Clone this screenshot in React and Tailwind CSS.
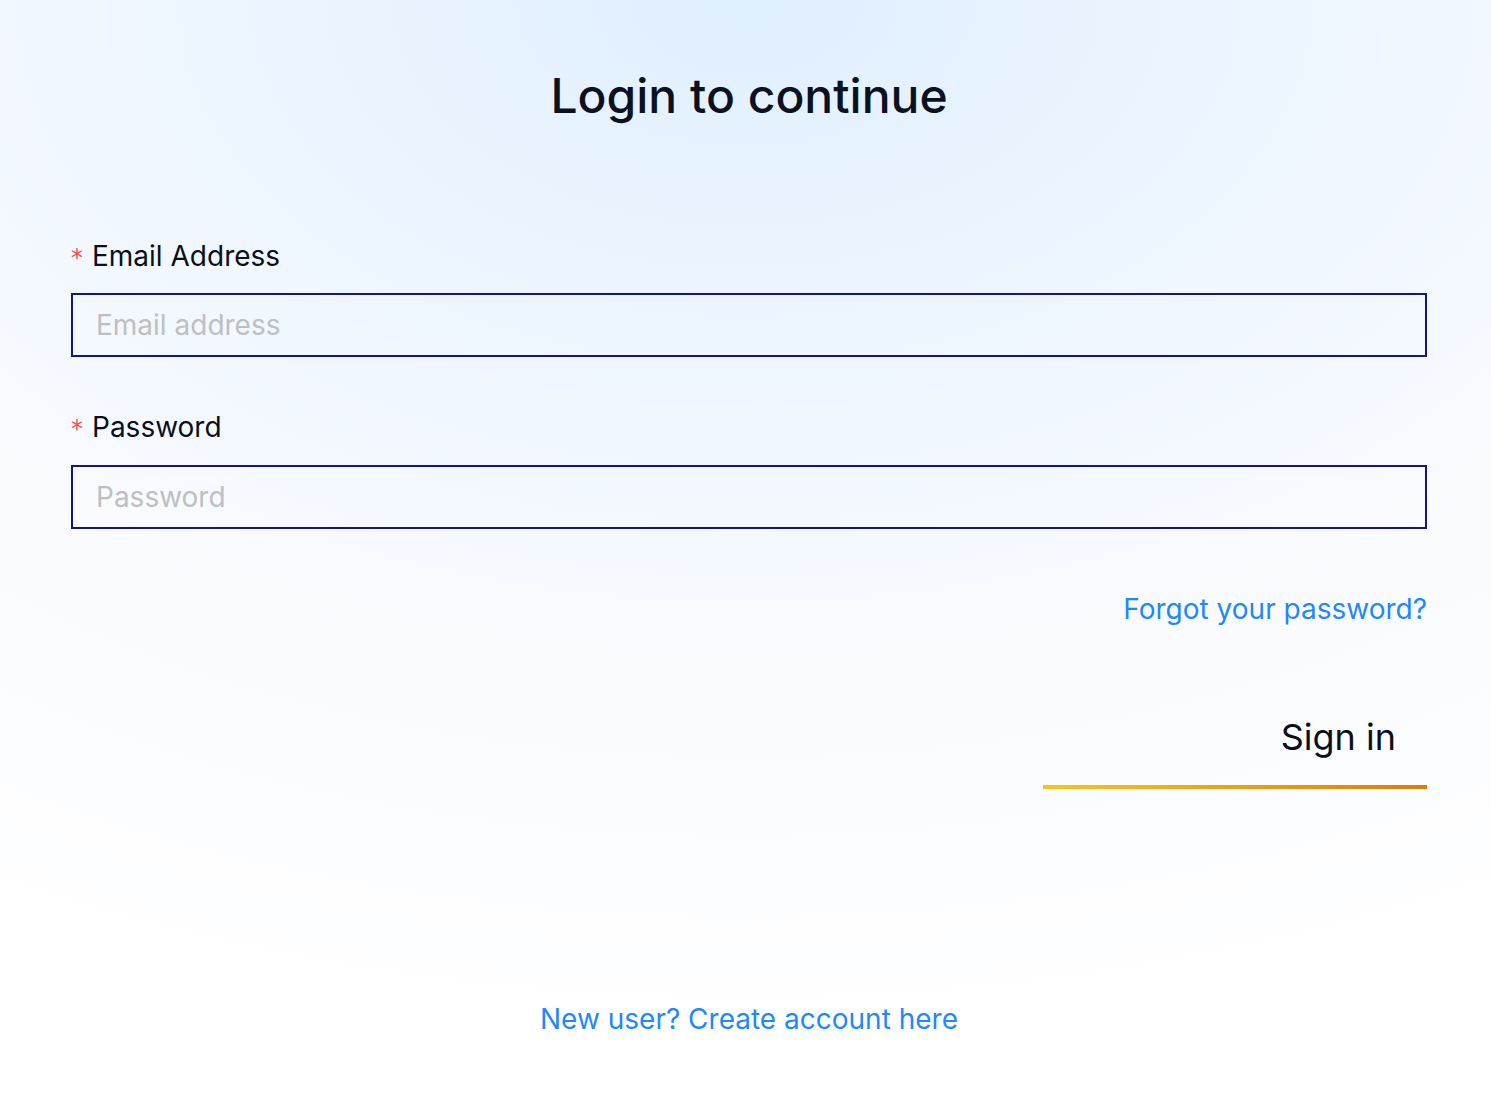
export default function App() {
  return (
    <div
      className="min-h-screen w-full bg-white font-['Inter',sans-serif] text-[#0a0f1a]"
      style={{ background: 'radial-gradient(ellipse 110% 95% at 50% 0%, #e0effe 0%, #eef6ff 35%, #f9fbff 65%, #ffffff 100%)' }}
    >
      <div className="flex min-h-[1104px] flex-col pl-[71px] pr-[64px]">
        <h1 className="mt-[67px] text-center text-[48px] font-medium leading-[58px] text-[#0b1120]">
          Login to continue
        </h1>

        <form className="mt-[114px] flex flex-col">
          <label className="flex items-center text-[28px] leading-[34px] text-[#0b0f19]">
            <span className="mr-[9px] mt-[3px] font-['DejaVu_Sans',sans-serif] text-[24px] leading-none text-[#ff4d4f]">*</span>
            Email Address
          </label>
          <input
            type="email"
            placeholder="Email address"
            className="mt-[20px] h-[64px] w-full border-2 border-[#14148f] bg-transparent px-[23px] text-[28px] outline-none placeholder:text-[#bfbfbf]"
          />

          <label className="mt-[53px] flex items-center text-[28px] leading-[34px] text-[#0b0f19]">
            <span className="mr-[9px] mt-[3px] font-['DejaVu_Sans',sans-serif] text-[24px] leading-none text-[#ff4d4f]">*</span>
            Password
          </label>
          <input
            type="password"
            placeholder="Password"
            className="mt-[21px] h-[64px] w-full border-2 border-[#14148f] bg-transparent px-[23px] text-[28px] outline-none placeholder:text-[#bfbfbf]"
          />

          <div className="mt-[63px] flex justify-end">
            <a href="#" className="text-[28px] leading-[34px] text-[#1e88ff]">
              Forgot your password?
            </a>
          </div>

          <div className="mt-[71px] flex justify-end">
            <button
              type="button"
              className="flex h-[92px] w-[384px] flex-col justify-end"
            >
              <span className="pr-[31px] text-right text-[36px] leading-[44px] text-[#0b0f19]">Sign in</span>
              <span className="mt-[26px] h-[4px] w-full bg-gradient-to-r from-[#f8c41c] to-[#e27a08]" />
            </button>
          </div>
        </form>

        <div className="mt-[213px] text-center">
          <a href="#" className="text-[28px] leading-[34px] text-[#1e88ff]">
            New user? Create account here
          </a>
        </div>
      </div>
    </div>
  );
}
